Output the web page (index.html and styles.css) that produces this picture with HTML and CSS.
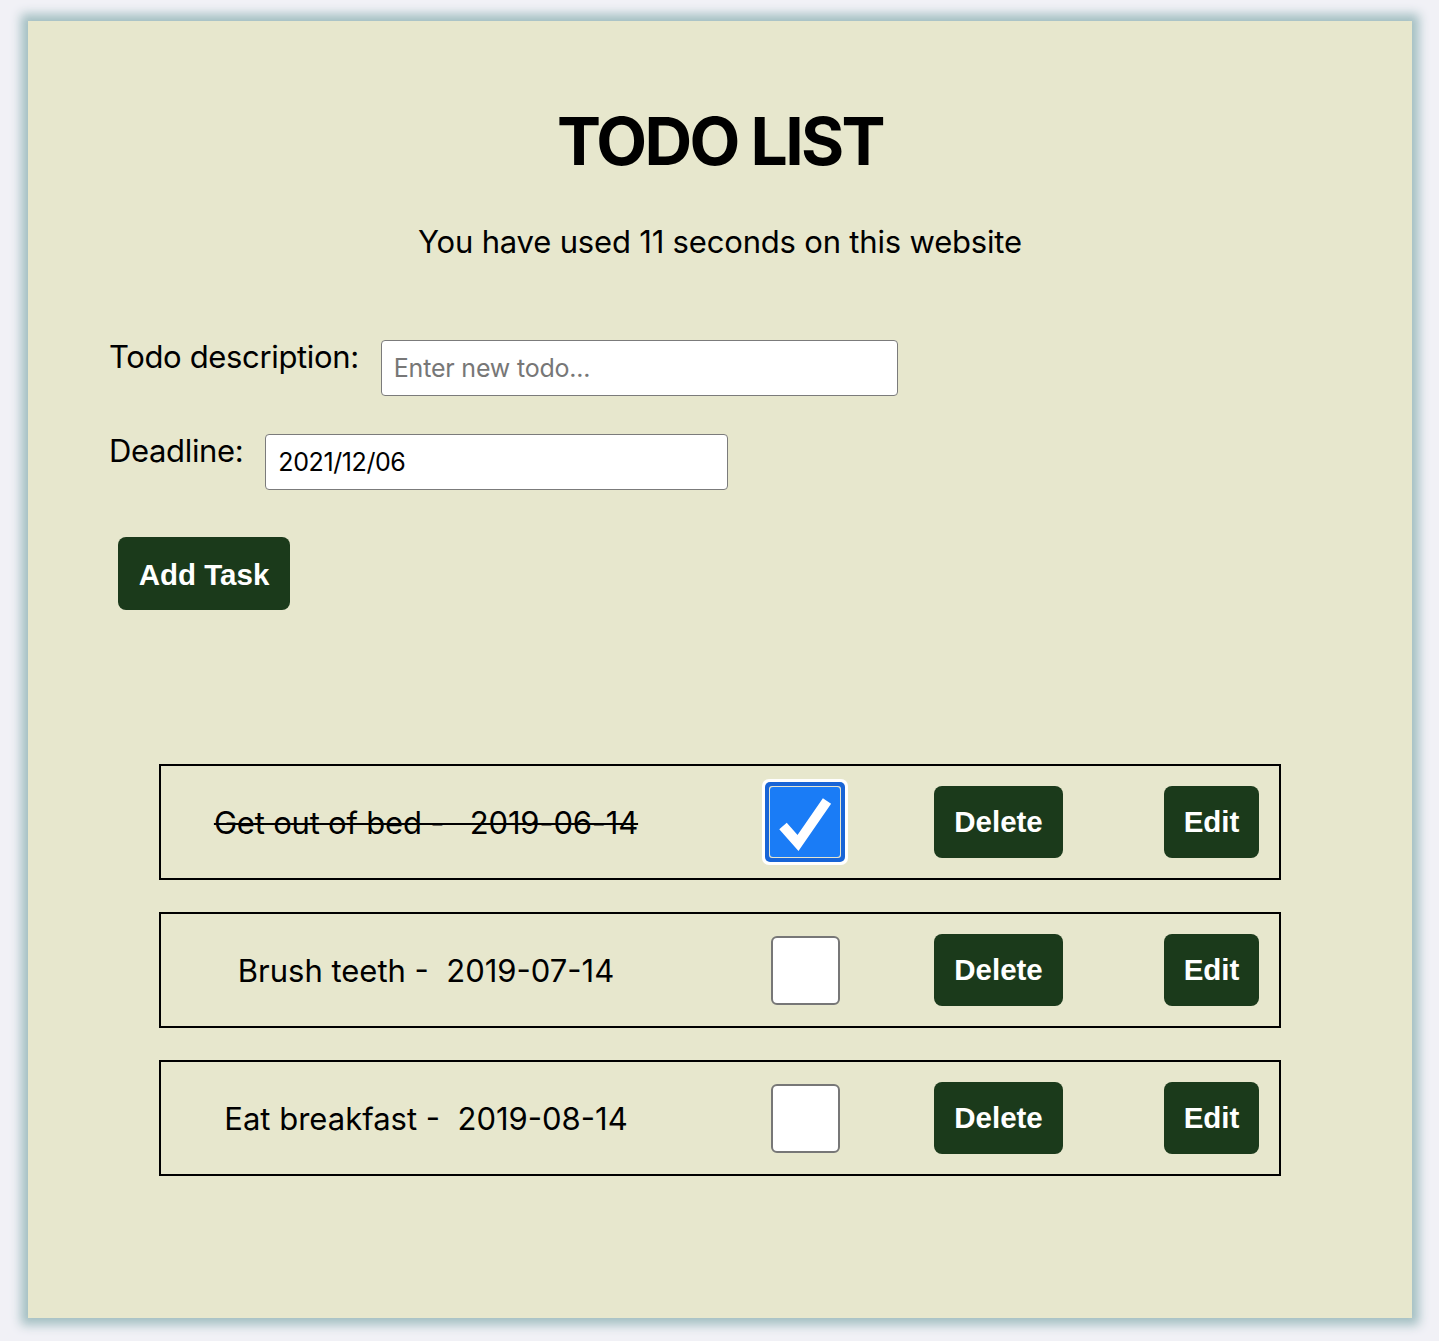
FILE: index.html
```html
<!DOCTYPE html>
<html lang="en">
<head>
<meta charset="utf-8">
<title>Todo List</title>
<link rel="stylesheet" href="styles.css">
</head>
<body>
<main class="card">
  <h1 class="title">TODO LIST</h1>
  <p class="timer">You have used 11 seconds on this website</p>

  <form class="form">
    <div class="field">
      <label class="label" for="desc">Todo description:</label>
      <input class="input input-desc" id="desc" type="text" placeholder="Enter new todo...">
    </div>
    <div class="field">
      <label class="label" for="deadline">Deadline:</label>
      <input class="input input-date" id="deadline" type="text" value="2021/12/06">
    </div>
    <button class="btn btn-add" type="button">Add Task</button>
  </form>

  <ul class="tasks">
    <li class="task">
      <span class="task-text done">Get out of bed -&nbsp;&nbsp; 2019-06-14</span>
      <span class="check-wrap">
        <svg class="check-on" width="86" height="86" viewBox="0 0 86 86" aria-hidden="true">
          <rect x="0" y="0" width="86" height="86" rx="7" fill="#ffffff"/>
          <rect x="3" y="3" width="80" height="80" rx="5" fill="#1764d6"/>
          <rect x="7" y="7" width="72" height="72" rx="3" fill="#e4e4cf"/>
          <rect x="8" y="8" width="70" height="70" rx="3" fill="#1a7cf6"/>
          <polyline points="21,47 36,64 65,22" fill="none" stroke="#ffffff" stroke-width="10" stroke-linejoin="miter"/>
        </svg>
      </span>
      <button class="btn btn-delete" type="button">Delete</button>
      <button class="btn btn-edit" type="button">Edit</button>
    </li>
    <li class="task">
      <span class="task-text">Brush teeth -&nbsp; 2019-07-14</span>
      <span class="check-wrap"><span class="check-off"></span></span>
      <button class="btn btn-delete" type="button">Delete</button>
      <button class="btn btn-edit" type="button">Edit</button>
    </li>
    <li class="task">
      <span class="task-text">Eat breakfast -&nbsp; 2019-08-14</span>
      <span class="check-wrap"><span class="check-off"></span></span>
      <button class="btn btn-delete" type="button">Delete</button>
      <button class="btn btn-edit" type="button">Edit</button>
    </li>
  </ul>
</main>
</body>
</html>
```

FILE: styles.css
```css
html, body {
  margin: 0;
  padding: 0;
}

body {
  background: #f1f1f6;
  padding: 21px 27px 23px 28px;
  font-family: Inter, "Noto Sans", sans-serif;
  color: #000;
}

.card {
  box-sizing: border-box;
  width: 1384px;
  height: 1297px;
  background: #e7e7cd;
  box-shadow: 0 0 10px 7px #a3bfc2;
  padding-top: 87px;
}

.title {
  margin: 0;
  text-align: center;
  font-size: 66px;
  line-height: 66px;
  font-weight: 700;
  letter-spacing: -2.7px;
}

.timer {
  margin: 52px 0 0;
  text-align: center;
  font-size: 31px;
  line-height: 31px;
  letter-spacing: -0.18px;
}

.form {
  margin: 83px 0 0 81px;
  display: flex;
  flex-direction: column;
  align-items: flex-start;
  gap: 38px;
}

.field {
  display: flex;
  align-items: flex-start;
  gap: 22px;
}

.label {
  font-size: 31px;
  line-height: 31px;
  letter-spacing: -0.35px;
  padding-top: 1px;
}

.input {
  box-sizing: border-box;
  height: 56px;
  border: 1.5px solid #7b7b7b;
  border-radius: 4px;
  background: #fff;
  font-family: Inter, "Noto Sans", sans-serif;
  font-size: 25px;
  color: #000;
  padding: 0 12px;
  outline: none;
}

.input::placeholder {
  color: #777;
}

.input-desc {
  width: 517px;
  letter-spacing: -0.2px;
}

.input-date {
  width: 463px;
  letter-spacing: -0.4px;
}

.btn {
  box-sizing: border-box;
  border: none;
  background: #1b3a1b;
  color: #fff;
  font-family: "Liberation Sans", Arial, sans-serif;
  font-weight: 700;
  font-size: 29.5px;
  border-radius: 8px;
  padding: 0;
  cursor: pointer;
}

.btn-add {
  margin: 9px 0 0 9px;
  width: 172px;
  height: 73px;
  padding-top: 3px;
}

.tasks {
  list-style: none;
  margin: 154px auto 0;
  padding: 0;
  width: 1122px;
  display: flex;
  flex-direction: column;
  gap: 32px;
}

.task {
  box-sizing: border-box;
  height: 116px;
  border: 2px solid #000;
  display: flex;
  align-items: center;
  padding-left: 20px;
}

.task-text {
  width: 490px;
  text-align: center;
  font-size: 31px;
  white-space: nowrap;
}

.task-text.done {
  text-decoration: line-through;
  text-decoration-thickness: 2px;
  letter-spacing: -0.2px;
}

.check-wrap {
  width: 86px;
  height: 86px;
  margin-left: 91px;
  display: flex;
  align-items: center;
  justify-content: center;
}

.check-on {
  display: block;
}

.check-off {
  box-sizing: border-box;
  width: 69px;
  height: 69px;
  background: #fff;
  border: 2px solid #777;
  border-radius: 6px;
}

.btn-delete {
  margin-left: 86px;
  width: 129px;
  height: 72px;
}

.btn-edit {
  margin-left: 101px;
  width: 95px;
  height: 72px;
}
```
